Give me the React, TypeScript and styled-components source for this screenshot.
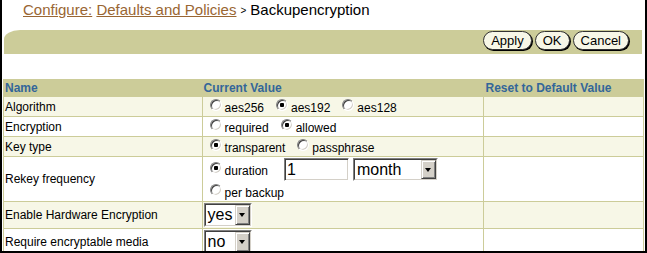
import { FC } from "react";
import styled, { createGlobalStyle } from "styled-components";

const GlobalStyle = createGlobalStyle`
  html, body {
    margin: 0;
    padding: 0;
    background: #fff;
  }
`;

interface ISelect {
  value: string;
  width: number;
  height: number;
}

const Select: FC<ISelect> = ({ value, width, height }) => (
  <SelectOuter $w={width} $h={height}>
    <SelectInner>
      <SelectValue>{value}</SelectValue>
      <DropButton>
        <Caret />
      </DropButton>
    </SelectInner>
  </SelectOuter>
);

interface IOption {
  name: string;
  label: string;
  checked?: boolean;
}

const Option: FC<IOption> = ({ name, label, checked }) => (
  <OptionLabel>
    <Radio type="radio" name={name} defaultChecked={checked} />
    {label}
  </OptionLabel>
);

const App: FC = () => {
  return (
    <>
      <GlobalStyle />
      <Frame>
        <Title>
          <Crumb>Configure:</Crumb> <Crumb>Defaults and Policies</Crumb>
          <Sep>&gt;</Sep>
          <Current>Backupencryption</Current>
        </Title>
        <Band>
          <Button>Apply</Button>
          <Button>OK</Button>
          <Button>Cancel</Button>
        </Band>
        <Table>
          <thead>
            <tr>
              <HeadCell $w={195}>Name</HeadCell>
              <HeadCell $w={278}>Current Value</HeadCell>
              <HeadCell $w={156}>Reset to Default Value</HeadCell>
            </tr>
          </thead>
          <tbody>
            <Row $shade $h={20}>
              <NameCell>Algorithm</NameCell>
              <ValueCell>
                <Option name="alg" label="aes256" />
                <Option name="alg" label="aes192" checked />
                <Option name="alg" label="aes128" />
              </ValueCell>
              <NameCell />
            </Row>
            <Row $h={20}>
              <NameCell>Encryption</NameCell>
              <ValueCell>
                <Option name="enc" label="required" />
                <Option name="enc" label="allowed" checked />
              </ValueCell>
              <NameCell />
            </Row>
            <Row $shade $h={20}>
              <NameCell>Key type</NameCell>
              <ValueCell>
                <Option name="key" label="transparent" checked />
                <Option name="key" label="passphrase" />
              </ValueCell>
              <NameCell />
            </Row>
            <Row $h={45}>
              <NameCell>Rekey frequency</NameCell>
              <ValueCell>
                <Line>
                  <Option name="rekey" label="duration" checked />
                  <TextField defaultValue="1" />
                  <Select value="month" width={85} height={23} />
                </Line>
                <LowerLine>
                  <Option name="rekey" label="per backup" />
                </LowerLine>
              </ValueCell>
              <NameCell />
            </Row>
            <Row $shade $h={27}>
              <NameCell>Enable Hardware Encryption</NameCell>
              <ValueCell>
                <Select value="yes" width={48} height={24} />
              </ValueCell>
              <NameCell />
            </Row>
            <Row $h={27}>
              <NameCell>Require encryptable media</NameCell>
              <ValueCell>
                <Select value="no" width={48} height={24} />
              </ValueCell>
              <NameCell />
            </Row>
          </tbody>
        </Table>
      </Frame>
    </>
  );
};

export default App;

const Frame = styled.div`
  box-sizing: border-box;
  width: 647px;
  height: 253px;
  overflow: hidden;
  border-left: 2px solid #000;
  border-right: 2px solid #000;
  border-bottom: 2px solid #000;
  padding: 0 1px 0 1px;
  font-family: "Liberation Sans", Arial, sans-serif;
  font-size: 12px;
  color: #000;
`;

const Title = styled.div`
  height: 30px;
  box-sizing: border-box;
  padding: 1px 0 0 20px;
  font-size: 15px;
  line-height: 18px;
  white-space: nowrap;
`;

const Crumb = styled.a`
  color: #996633;
  text-decoration: underline;
  cursor: pointer;
`;

const Sep = styled.span`
  font-size: 10px;
  margin: 0 4px 0 4px;
  vertical-align: 1px;
`;

const Current = styled.span`
  color: #000;
`;

const Band = styled.div`
  display: flex;
  justify-content: flex-end;
  align-items: flex-start;
  gap: 3px;
  height: 24px;
  box-sizing: border-box;
  margin: 0 2px 0 1px;
  padding: 1px 13px 0 0;
  background: #cccc99;
  border-top-left-radius: 16px 9px;
`;

const Button = styled.button`
  height: 19px;
  box-sizing: border-box;
  padding: 0 7px;
  border: 1px solid #333;
  border-radius: 10px;
  box-shadow: 1px 1px 0 #000;
  background: #f7f7e7;
  font-family: "Liberation Sans", Arial, sans-serif;
  font-size: 13px;
  line-height: 16px;
  color: #000;
  cursor: pointer;
`;

const Table = styled.table`
  margin-top: 25px;
  width: 641px;
  border-collapse: collapse;
  table-layout: fixed;
`;

const HeadCell = styled.th<{ $w: number }>`
  width: ${(p) => p.$w}px;
  height: 16px;
  padding: 0 1px;
  background: #cccc99;
  border: 1px solid #cccc99;
  color: #336699;
  font-size: 12px;
  font-weight: bold;
  text-align: left;
  vertical-align: middle;
  white-space: nowrap;
`;

const Row = styled.tr<{ $shade?: boolean; $h: number }>`
  height: ${(p) => p.$h}px;
  background: ${(p) => (p.$shade ? "#f7f7e7" : "#fff")};
`;

const NameCell = styled.td`
  padding: 0 1px;
  border: 1px solid #cccc99;
  vertical-align: middle;
  white-space: nowrap;
`;

const ValueCell = styled(NameCell)`
  padding: 0 1px;
`;

const OptionLabel = styled.label`
  display: inline-block;
  margin-right: 6px;
  white-space: nowrap;
  line-height: 14px;
`;

const Radio = styled.input`
  appearance: none;
  box-sizing: border-box;
  width: 12px;
  height: 12px;
  margin: 0 3px 0 6px;
  vertical-align: 1px;
  border-radius: 50%;
  border: 1px solid;
  border-color: #808080 #fff #fff #808080;
  box-shadow: inset 1px 1px 0 #404040, inset -1px -1px 0 #d4d0c8;
  background: #fff;

  &:checked {
    background: radial-gradient(circle, #000 0 2px, #fff 2.5px);
  }
`;

const Line = styled.div`
  display: flex;
  align-items: center;
  height: 24px;
`;

const LowerLine = styled.div`
  height: 19px;
  padding-top: 2px;
  box-sizing: border-box;
`;

const TextField = styled.input`
  box-sizing: border-box;
  width: 65px;
  height: 23px;
  margin: 0 4px 0 10px;
  padding: 0 2px;
  border: 1px solid;
  border-color: #808080 #fff #fff #808080;
  box-shadow: inset 1px 1px 0 #404040, inset -1px -1px 0 #d4d0c8;
  font-family: "Liberation Sans", Arial, sans-serif;
  font-size: 16px;
  color: #000;
  outline: none;
`;

const SelectOuter = styled.div<{ $w: number; $h: number }>`
  display: inline-flex;
  box-sizing: border-box;
  width: ${(p) => p.$w}px;
  height: ${(p) => p.$h}px;
  border: 1px solid;
  border-color: #808080 #fff #fff #808080;
  background: #fff;
  vertical-align: middle;
`;

const SelectInner = styled.div`
  display: flex;
  flex: 1;
  border: 1px solid;
  border-color: #404040 #d4d0c8 #d4d0c8 #404040;
`;

const SelectValue = styled.span`
  flex: 1;
  display: flex;
  align-items: center;
  padding-left: 2px;
  font-size: 16px;
`;

const DropButton = styled.span`
  display: flex;
  align-items: center;
  justify-content: center;
  box-sizing: border-box;
  width: 15px;
  background: #d4d0c8;
  border: 1px solid;
  border-color: #d4d0c8 #404040 #404040 #d4d0c8;
  box-shadow: inset 1px 1px 0 #fff, inset -1px -1px 0 #808080;
`;

const Caret = styled.span`
  width: 0;
  height: 0;
  border-left: 3px solid transparent;
  border-right: 3px solid transparent;
  border-top: 4px solid #000;
`;
